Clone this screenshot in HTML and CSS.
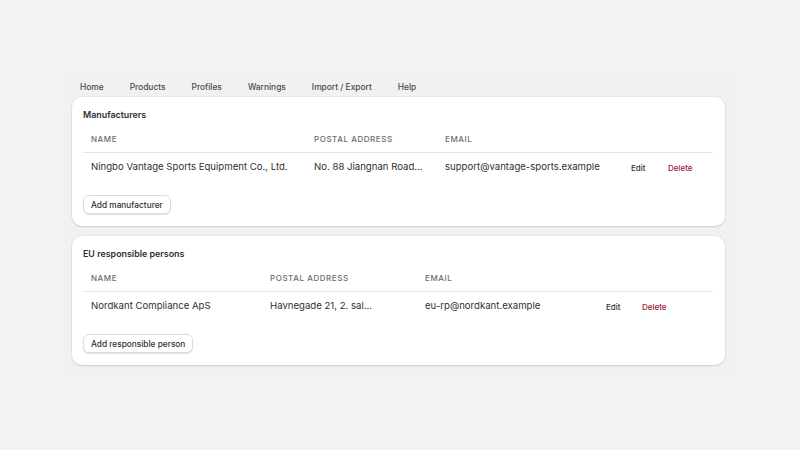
FILE: index.html
```html
<!DOCTYPE html>
<html lang="en">
<head>
  <meta charset="UTF-8">
  <meta name="viewport" content="width=device-width, initial-scale=1.0">
  <title>Compliance contacts</title>
  <link rel="stylesheet" href="styles.css">
</head>
<body>
  <div class="frame">
    <!-- Navegacion -->
    <nav class="nav">
      <a href="#">Home</a>
      <a href="#">Products</a>
      <a href="#">Profiles</a>
      <a href="#">Warnings</a>
      <a href="#">Import / Export</a>
      <a href="#">Help</a>
    </nav>

    <!-- Fabricantes -->
    <section class="card">
      <h2>Manufacturers</h2>
      <table class="list list-makers">
        <thead>
          <tr>
            <th class="c1">Name</th>
            <th class="c2">Postal address</th>
            <th class="c3">Email</th>
            <th class="c4"></th>
            <th class="c5"></th>
          </tr>
        </thead>
        <tbody>
          <tr>
            <td>Ningbo Vantage Sports Equipment Co., Ltd.</td>
            <td>No. 88 Jiangnan Road...</td>
            <td>support@vantage-sports.example</td>
            <td><button class="link">Edit</button></td>
            <td><button class="link danger">Delete</button></td>
          </tr>
        </tbody>
      </table>
      <button class="btn">Add manufacturer</button>
    </section>

    <!-- Personas responsables UE -->
    <section class="card">
      <h2>EU responsible persons</h2>
      <table class="list list-persons">
        <thead>
          <tr>
            <th class="c1">Name</th>
            <th class="c2">Postal address</th>
            <th class="c3">Email</th>
            <th class="c4"></th>
            <th class="c5"></th>
          </tr>
        </thead>
        <tbody>
          <tr>
            <td>Nordkant Compliance ApS</td>
            <td>Havnegade 21, 2. sal...</td>
            <td>eu-rp@nordkant.example</td>
            <td><button class="link">Edit</button></td>
            <td><button class="link danger">Delete</button></td>
          </tr>
        </tbody>
      </table>
      <button class="btn">Add responsible person</button>
    </section>
  </div>
</body>
</html>
```

FILE: styles.css
```css
/* BASE */
* {
  margin: 0;
  padding: 0;
  box-sizing: border-box;
  font-family: Inter, "Noto Sans", sans-serif;
}

body {
  background-color: #f1f2f4;
  padding: 68px 0 0 64px;
}

/* MARCO PRINCIPAL */
.frame {
  width: 671px;
  background-color: #f1f1f1;
  padding: 0 10px 13px 8px;
  display: flex;
  flex-direction: column;
  gap: 10px;
}

/* NAVEGACION */
.nav {
  display: flex;
  gap: 26px;
  padding: 13px 0 0 8px;
  height: 29px;
  margin-bottom: -10px;
}

.nav a {
  font-size: 8.4px;
  line-height: 12px;
  font-weight: 500;
  color: #4a4a4a;
  text-decoration: none;
}

/* TARJETAS */
.card {
  background-color: #fff;
  border-radius: 10px;
  box-shadow: 0 1px 2px rgba(0,0,0,0.12), 0 0 0 1px rgba(0,0,0,0.03);
  padding: 11px 12px 12px 11px;
}

.card h2 {
  font-size: 8.9px;
  line-height: 13px;
  font-weight: 600;
  color: #303030;
  margin-bottom: 6px;
}

/* TABLA */
.list {
  width: 630px;
  border-collapse: collapse;
  table-layout: fixed;
}

.list th {
  text-align: left;
  font-size: 8px;
  line-height: 12px;
  font-weight: 500;
  letter-spacing: 0.07em;
  text-transform: uppercase;
  color: #6b6b6b;
  padding: 6px 8px 7px;
  border-bottom: 1px solid #e3e3e3;
}

.list td {
  font-size: 9.6px;
  line-height: 13px;
  color: #303030;
  padding: 7px 8px 9px;
  white-space: nowrap;
}

.list-makers .c1 { width: 223px; }
.list-makers .c2 { width: 131px; }
.list-makers .c3 { width: 186px; }
.list-makers .c4 { width: 37px; }
.list-makers .c5 { width: 53px; }

.list-persons .c1 { width: 179px; }
.list-persons .c2 { width: 155px; }
.list-persons .c3 { width: 181px; }
.list-persons .c4 { width: 36px; }
.list-persons .c5 { width: 79px; }

/* BOTONES */
.link {
  background: none;
  border: none;
  font-size: 8px;
  font-weight: 500;
  color: #303030;
  cursor: pointer;
  position: relative;
  top: 1px;
}

.link.danger {
  color: #9e2037;
}

.btn {
  margin-top: 13px;
  height: 19px;
  padding: 0 7px;
  background-color: #fff;
  border: 1px solid #dcdcdc;
  border-radius: 6px;
  box-shadow: 0 1px 1px rgba(0,0,0,0.12);
  font-size: 8.3px;
  font-weight: 500;
  color: #303030;
  cursor: pointer;
}
```
